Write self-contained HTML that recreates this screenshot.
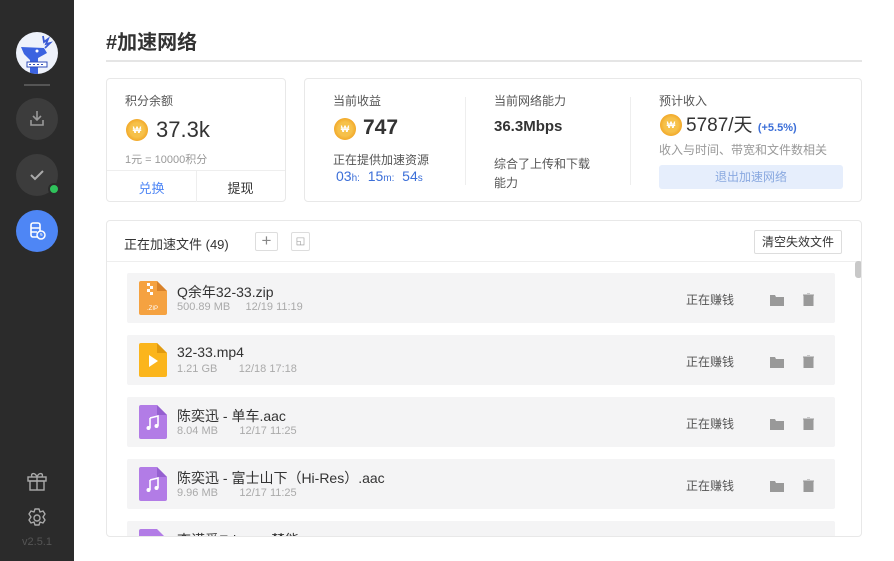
<!DOCTYPE html><html><head><meta charset="utf-8"><style>
*{margin:0;padding:0;box-sizing:border-box}
body{width:894px;height:561px;overflow:hidden;background:#fff;font-family:"Liberation Sans","Noto Sans CJK SC",sans-serif;position:relative;color:#333}
.a{position:absolute}
.sb{left:0;top:0;width:74px;height:561px;background:#2b2b2b}
.circ{position:absolute;left:16px;width:42px;height:42px;border-radius:50%;background:#3c3c3c}
.card{position:absolute;border:1px solid #e8e8e8;border-radius:4px;background:#fff}
.coin{position:absolute;width:22px;height:22px;border-radius:50%;background:radial-gradient(circle,#f6c14a 45%,#f2a92a 70%,#f8d27a 100%);color:#fff;font-size:9px;text-align:center;line-height:22px;font-weight:bold}
.row{position:absolute;left:127px;width:708px;height:50px;background:#f4f4f5;border-radius:2px}
.nm{position:absolute;left:50px;top:9px;font-size:14px;color:#333;white-space:nowrap}
.mt{position:absolute;left:50px;top:28px;font-size:11px;color:#aaa;white-space:nowrap}
.st{position:absolute;left:559px;top:18px;font-size:12px;color:#555}
.ic{position:absolute;left:12px;top:8px;width:28px;height:34px}
</style></head><body>
<div class="a sb">
 <div class="a" style="left:16px;top:32px;width:42px;height:42px;border-radius:50%;background:#eef2fb;overflow:hidden">
  <svg width="42" height="42" viewBox="0 0 42 42"><path d="M27 4l1 6 4-3-2 5 4-1-5 5" stroke="#3b5bd6" stroke-width="1.8" fill="none"/><path d="M5 15l23 1 3 5-9 5v16H14V28L8 22z" fill="#3b63e0"/><path d="M11 30h20v5H11z" fill="#fff" stroke="#2f4cb8" stroke-width="1"/><path d="M13 32.5h16" stroke="#2f4cb8" stroke-width="1" stroke-dasharray="2 2"/><circle cx="21" cy="19" r="1.5" fill="#fff"/></svg>
 </div>
 <div class="a" style="left:24px;top:84px;width:26px;height:2px;background:#555"></div>
 <div class="circ" style="top:98px"><svg width="42" height="42" viewBox="0 0 42 42"><path d="M21 13v9m-4-4l4 4 4-4M15 22v5h12v-5" stroke="#999" stroke-width="1.6" fill="none"/></svg></div>
 <div class="circ" style="top:154px"><svg width="42" height="42" viewBox="0 0 42 42"><path d="M15 21l4 4 8-8" stroke="#aaa" stroke-width="2" fill="none"/></svg></div>
 <div class="a" style="left:48px;top:183px;width:12px;height:12px;border-radius:50%;background:#2fc25b;border:2px solid #2b2b2b"></div>
 <div class="circ" style="top:210px;background:#4e86f5"><svg width="42" height="42" viewBox="0 0 42 42"><rect x="15" y="13" width="9" height="14" rx="2" stroke="#fff" stroke-width="1.6" fill="none"/><path d="M15 18h9M15 22h6" stroke="#fff" stroke-width="1.4"/><circle cx="25" cy="25" r="4" fill="#4e86f5" stroke="#fff" stroke-width="1.5"/><path d="M25 23v2h1.5" stroke="#fff" stroke-width="1"/></svg></div>
 <svg class="a" style="left:26px;top:470px" width="22" height="22" viewBox="0 0 22 22"><rect x="2" y="7" width="18" height="4" stroke="#aaa" fill="none" stroke-width="1.4"/><rect x="4" y="11" width="14" height="9" stroke="#aaa" fill="none" stroke-width="1.4"/><path d="M11 7v13M11 7c-2-5-7-4-5 0M11 7c2-5 7-4 5 0" stroke="#aaa" fill="none" stroke-width="1.4"/></svg>
 <svg class="a" style="left:26px;top:507px" width="22" height="22" viewBox="0 0 22 22"><path d="M9 2h4l1 3 3-1 2 3-2 3 2 3-2 3-3-1-1 3H9l-1-3-3 1-2-3 2-3-2-3 2-3 3 1z" stroke="#aaa" fill="none" stroke-width="1.4" stroke-linejoin="round"/><circle cx="11" cy="11" r="3" stroke="#aaa" fill="none" stroke-width="1.4"/></svg>
 <div class="a" style="left:0;width:74px;top:536px;text-align:center;font-size:11px;color:#555">v2.5.1</div>
</div>

<div class="a" style="left:106px;top:26px;font-size:20px;font-weight:bold;color:#333">#加速网络</div>
<div class="a" style="left:106px;top:60px;width:756px;height:2px;background:#e5e5e5"></div>

<div class="card" style="left:106px;top:78px;width:180px;height:124px">
 <div class="a" style="left:18px;top:13px;font-size:12px;color:#555">积分余额</div>
 <div class="coin" style="left:19px;top:40px">₩</div>
 <div class="a" style="left:49px;top:38px;font-size:22px;color:#333">37.3k</div>
 <div class="a" style="left:18px;top:72px;font-size:11px;color:#999">1元 = 10000积分</div>
 <div class="a" style="left:0;top:91px;width:178px;height:1px;background:#eee"></div>
 <div class="a" style="left:89px;top:91px;width:1px;height:32px;background:#eee"></div>
 <div class="a" style="left:0;top:99px;width:89px;text-align:center;font-size:13px;color:#4e86f5">兑换</div>
 <div class="a" style="left:89px;top:99px;width:89px;text-align:center;font-size:13px;color:#333">提现</div>
</div>

<div class="card" style="left:304px;top:78px;width:558px;height:124px">
 <div class="a" style="left:28px;top:13px;font-size:12px;color:#555">当前收益</div>
 <div class="coin" style="left:29px;top:39px">₩</div>
 <div class="a" style="left:58px;top:37px;font-size:21px;font-weight:bold;color:#333">747</div>
 <div class="a" style="left:28px;top:72px;font-size:12px;color:#555">正在提供加速资源</div>
 <div class="a" style="left:31px;top:89px;font-size:14px;color:#3c6fd8;white-space:nowrap">03<small style="font-size:10px">h:</small>&nbsp; 15<small style="font-size:10px">m:</small>&nbsp; 54<small style="font-size:10px">s</small></div>
 <div class="a" style="left:160px;top:18px;width:1px;height:88px;background:#eee"></div>
 <div class="a" style="left:189px;top:13px;font-size:12px;color:#555">当前网络能力</div>
 <div class="a" style="left:189px;top:39px;font-size:15px;font-weight:bold;color:#333">36.3Mbps</div>
 <div class="a" style="left:189px;top:76px;width:106px;font-size:12px;color:#555;line-height:19px">综合了上传和下载能力</div>
 <div class="a" style="left:325px;top:18px;width:1px;height:88px;background:#eee"></div>
 <div class="a" style="left:354px;top:13px;font-size:12px;color:#555">预计收入</div>
 <div class="coin" style="left:355px;top:35px">₩</div>
 <div class="a" style="left:381px;top:35px;font-size:19px;color:#333;white-space:nowrap;line-height:24px">5787/天 <span style="font-size:11px;color:#3c6fd8;font-weight:bold">(+5.5%)</span></div>
 <div class="a" style="left:354px;top:62px;font-size:12px;color:#999">收入与时间、带宽和文件数相关</div>
 <div class="a" style="left:354px;top:86px;width:184px;height:24px;border-radius:3px;background:#e6eefc;color:#8aa9e0;font-size:12px;text-align:center;line-height:24px">退出加速网络</div>
</div>

<div class="card" style="left:106px;top:220px;width:756px;height:317px;overflow:hidden">
 <div class="a" style="left:17px;top:13px;font-size:13px;color:#333">正在加速文件 (49)</div>
 <div class="a" style="left:148px;top:11px;width:23px;height:19px;border:1px solid #ddd;border-radius:2px;color:#888;text-align:center;line-height:16px;font-size:17px">+</div>
 <div class="a" style="left:184px;top:11px;width:19px;height:19px;border:1px solid #ddd;border-radius:2px;color:#999;text-align:center;line-height:17px;font-size:10px">◱</div>
 <div class="a" style="left:647px;top:9px;width:88px;height:24px;border:1px solid #ddd;border-radius:2px;font-size:12px;color:#333;text-align:center;line-height:22px">清空失效文件</div>
 <div class="a" style="left:0;top:40px;width:756px;height:1px;background:#eee"></div>
 <div class="a" style="left:748px;top:40px;width:7px;height:17px;border-radius:3px;background:#c8c8c8"></div>
</div>

<div class="row" style="top:273px"><svg class="ic" viewBox="0 0 28 34"><path d="M0 2a2 2 0 012-2h16l10 10v22a2 2 0 01-2 2H2a2 2 0 01-2-2z" fill="#f5a241"/><path d="M18 0v10h10z" fill="#d8822a"/><path d="M8 2h3v3H8zm3 3h3v3h-3zM8 8h3v3H8zm3 3h3v3h-3z" fill="#fff"/><text x="8" y="29" font-size="6" fill="#fff" font-family="Liberation Sans">.ZIP</text></svg><div class="nm">Q余年32-33.zip</div><div class="mt">500.89 MB &nbsp; &nbsp; 12/19 11:19</div><div class="st">正在赚钱</div></div>
<div class="row" style="top:335px"><svg class="ic" viewBox="0 0 28 34"><path d="M0 2a2 2 0 012-2h16l10 10v22a2 2 0 01-2 2H2a2 2 0 01-2-2z" fill="#fbb51c"/><path d="M18 0v10h10z" fill="#e09a10"/><path d="M10 12l9 6-9 6z" fill="#fff"/></svg><div class="nm">32-33.mp4</div><div class="mt">1.21 GB &nbsp; &nbsp; &nbsp; 12/18 17:18</div><div class="st">正在赚钱</div></div>
<div class="row" style="top:397px"><svg class="ic" viewBox="0 0 28 34"><path d="M0 2a2 2 0 012-2h16l10 10v22a2 2 0 01-2 2H2a2 2 0 01-2-2z" fill="#b27ce6"/><path d="M18 0v10h10z" fill="#9560d0"/><path d="M11 13l8-2v10M11 13v10" stroke="#fff" stroke-width="1.6" fill="none"/><circle cx="9.5" cy="23" r="2" fill="#fff"/><circle cx="17.5" cy="21" r="2" fill="#fff"/></svg><div class="nm">陈奕迅 - 单车.aac</div><div class="mt">8.04 MB &nbsp; &nbsp; &nbsp; 12/17 11:25</div><div class="st">正在赚钱</div></div>
<div class="row" style="top:459px"><svg class="ic" viewBox="0 0 28 34"><path d="M0 2a2 2 0 012-2h16l10 10v22a2 2 0 01-2 2H2a2 2 0 01-2-2z" fill="#b27ce6"/><path d="M18 0v10h10z" fill="#9560d0"/><path d="M11 13l8-2v10M11 13v10" stroke="#fff" stroke-width="1.6" fill="none"/><circle cx="9.5" cy="23" r="2" fill="#fff"/><circle cx="17.5" cy="21" r="2" fill="#fff"/></svg><div class="nm">陈奕迅 - 富士山下（Hi-Res）.aac</div><div class="mt">9.96 MB &nbsp; &nbsp; &nbsp; 12/17 11:25</div><div class="st">正在赚钱</div></div>
<div class="a" style="left:107px;top:521px;width:754px;height:15px;overflow:hidden"><div class="row" style="left:20px;top:0"><svg class="ic" viewBox="0 0 28 34"><path d="M0 2a2 2 0 012-2h16l10 10v22a2 2 0 01-2 2H2a2 2 0 01-2-2z" fill="#b27ce6"/></svg><div class="nm">李谟爱Edson - 禁能.aac</div></div></div>

<svg class="a" style="left:770px;top:294px" width="14" height="12"><path d="M0 1h5l1 2h8v9H0z" fill="#999"/></svg>
<svg class="a" style="left:803px;top:293px" width="11" height="13"><path d="M0 2h11M4 0h3M1 3h9v10H1z" fill="#999" stroke="#999"/></svg>
<svg class="a" style="left:770px;top:356px" width="14" height="12"><path d="M0 1h5l1 2h8v9H0z" fill="#999"/></svg>
<svg class="a" style="left:803px;top:355px" width="11" height="13"><path d="M0 2h11M4 0h3M1 3h9v10H1z" fill="#999" stroke="#999"/></svg>
<svg class="a" style="left:770px;top:418px" width="14" height="12"><path d="M0 1h5l1 2h8v9H0z" fill="#999"/></svg>
<svg class="a" style="left:803px;top:417px" width="11" height="13"><path d="M0 2h11M4 0h3M1 3h9v10H1z" fill="#999" stroke="#999"/></svg>
<svg class="a" style="left:770px;top:480px" width="14" height="12"><path d="M0 1h5l1 2h8v9H0z" fill="#999"/></svg>
<svg class="a" style="left:803px;top:479px" width="11" height="13"><path d="M0 2h11M4 0h3M1 3h9v10H1z" fill="#999" stroke="#999"/></svg>
</body></html>
